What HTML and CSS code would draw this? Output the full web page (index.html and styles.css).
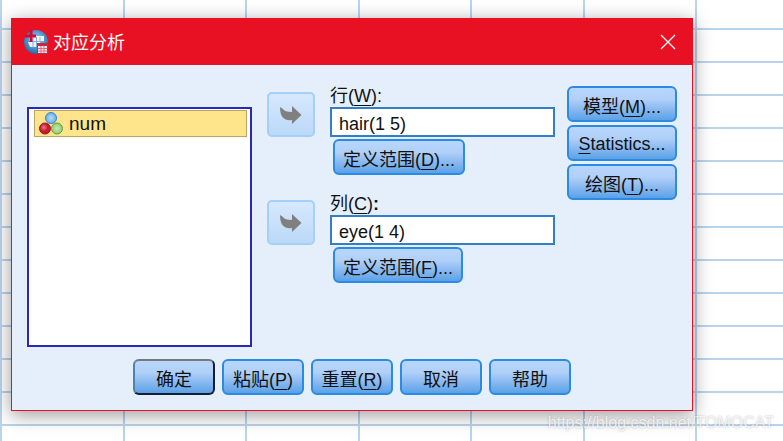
FILE: index.html
```html
<!DOCTYPE html>
<html lang="zh">
<head>
    <meta charset="UTF-8">
    <meta name="viewport" content="width=device-width, initial-scale=1.0">
    <title>对应分析</title>
    <link rel="stylesheet" href="styles.css">
</head>
<body>
    <main class="dialog">
        <header class="title-bar">
            <svg class="app-icon" viewBox="0 0 24 24" aria-hidden="true">
                <defs>
                    <radialGradient id="globe" cx="0.5" cy="0.4" r="0.6">
                        <stop offset="0" stop-color="#a9d3f0"/>
                        <stop offset="0.6" stop-color="#4f94cc"/>
                        <stop offset="1" stop-color="#2469aa"/>
                    </radialGradient>
                </defs>
                <circle cx="12" cy="12" r="12" fill="url(#globe)"/>
                <path d="M5 6h15v5H5zM4 12h12v5H6z" fill="#eef6fc"/>
                <path d="M5 11.500h15M9 8v9M12.500 7v10M16 7v4" stroke="#79b1dc" fill="none"/>
                <path d="M7 0v12M1 6h11" stroke="#d00b35" stroke-width="3"/>
                <path d="M13 13h11v11H13z" fill="#c92747"/>
                <path d="M14 16h9v7h-9z" fill="#fbe9ee"/>
                <path d="M14 18.500h9M14 21h9M17 16v7M20 16v7" stroke="#dc6a82"/>
            </svg>
            <h1>对应分析</h1>
            <button class="close-btn" type="button" aria-label="关闭">
                <svg viewBox="0 0 16 16"><path d="M1 1l14 14M15 1L1 15" stroke="#fff" stroke-width="1.300"/></svg>
            </button>
        </header>

        <form class="dialog-body">
            <div class="panel">
                <ul class="var-list">
                    <li class="var-item">
                        <svg class="var-icon" viewBox="0 0 24 23" aria-hidden="true">
                            <defs>
                                <radialGradient id="ballBlue"><stop offset="0" stop-color="#b5dcfb"/><stop offset="1" stop-color="#67aeea"/></radialGradient>
                                <radialGradient id="ballRed" cx="0.4" cy="0.4"><stop offset="0" stop-color="#ee7b84"/><stop offset="0.7" stop-color="#c41c30"/></radialGradient>
                                <radialGradient id="ballGreen"><stop offset="0" stop-color="#cbe8ae"/><stop offset="1" stop-color="#93c96c"/></radialGradient>
                            </defs>
                            <circle cx="12" cy="6" r="5.500" fill="url(#ballBlue)" stroke="#3b82c6"/>
                            <circle cx="6" cy="16.500" r="5.500" fill="url(#ballRed)" stroke="#a51327"/>
                            <circle cx="18" cy="16.500" r="5.500" fill="url(#ballGreen)" stroke="#60a043"/>
                        </svg>
                        <span>num</span>
                    </li>
                </ul>

                <div class="fields">
                    <div class="field-row">
                        <button class="arrow-btn" type="button" aria-label="移到行" disabled>
                            <svg viewBox="0 0 22 20"><path d="M0 2l3 2c1 2 4 3 9 3V1l9.500 9L12 19v-4C5 16 0 13 0 2z"/></svg>
                        </button>
                        <div class="field">
                            <label for="row-var">行(<u>W</u>):</label>
                            <input id="row-var" type="text" value="hair(1 5)">
                            <button class="btn range-btn" type="button">定义范围(<u>D</u>)...</button>
                        </div>
                    </div>
                    <div class="field-row">
                        <button class="arrow-btn" type="button" aria-label="移到列" disabled>
                            <svg viewBox="0 0 22 20"><path d="M0 2l3 2c1 2 4 3 9 3V1l9.500 9L12 19v-4C5 16 0 13 0 2z"/></svg>
                        </button>
                        <div class="field">
                            <label for="col-var">列(<u>C</u>)<b>:</b></label>
                            <input id="col-var" type="text" value="eye(1 4)">
                            <button class="btn range-btn" type="button">定义范围(<u>F</u>)...</button>
                        </div>
                    </div>
                </div>

                <div class="options">
                    <button class="btn" type="button">模型(<u>M</u>)...</button>
                    <button class="btn" type="button"><u>S</u>tatistics...</button>
                    <button class="btn" type="button">绘图(<u>T</u>)...</button>
                </div>
            </div>

            <footer class="actions">
                <button class="btn btn-default" type="submit">确定</button>
                <button class="btn" type="button">粘贴(<u>P</u>)</button>
                <button class="btn" type="reset">重置(<u>R</u>)</button>
                <button class="btn" type="button">取消</button>
                <button class="btn" type="button">帮助</button>
            </footer>
        </form>
    </main>

    <p class="watermark">https://blog.csdn.net/TOMOCAT</p>
</body>
</html>
```
FILE: styles.css
```css
:root {
    --red: #e81123;
    --panel: #e4effb;
    --line: #bad4ed;
    --btn-border: #2b8ae2;
}

* {
    margin: 0;
    padding: 0;
    box-sizing: border-box;
}

/* spreadsheet behind the dialog: two wide columns, then narrower ones */
body {
    min-height: 100vh;
    padding: 18px 90px 30px 11px;
    overflow: hidden;
    font-family: "Liberation Sans", "Noto Sans CJK SC", sans-serif;
    font-size: 18px;
    color: #111;
    background-color: #fff;
    background-image:
        linear-gradient(90deg,
            var(--line) 0 2px, transparent 2px 123px,
            var(--line) 123px 125px, transparent 125px 245px,
            var(--line) 245px 247px, transparent 247px 358px,
            var(--line) 358px 360px, transparent 360px 470px,
            var(--line) 470px 472px, transparent 472px 583px,
            var(--line) 583px 585px, transparent 585px 695px,
            var(--line) 695px 697px, transparent 697px),
        repeating-linear-gradient(180deg, transparent 0 28px, var(--line) 28px 30px, transparent 30px 33px);
}

.dialog {
    border: 1px solid var(--red);
    background: var(--panel);
    box-shadow: 0 4px 18px rgba(0, 0, 0, 0.4);
}

.title-bar {
    display: flex;
    align-items: center;
    gap: 5px;
    height: 46px;
    padding: 0 16px 0 12px;
    background: var(--red);
    color: #fff;
}

.title-bar h1 {
    flex: 1;
    padding-bottom: 3px;
    font-family: "Noto Sans CJK SC", sans-serif;
    font-size: 18px;
    font-weight: 400;
}

.app-icon {
    width: 24px;
    height: 24px;
}

.close-btn {
    width: 16px;
    height: 16px;
    border: 0;
    background: none;
}

.close-btn svg {
    display: block;
}

.dialog-body {
    padding: 20px 15px 15px;
}

.panel {
    display: grid;
    grid-template-columns: 225fr 291fr 110px;
    column-gap: 12px;
}

.var-list {
    min-height: 240px;
    margin-top: 22px;
    padding: 1px 3px 0 5px;
    border: 2px solid #2a28b8;
    background: #fff;
    list-style: none;
}

.var-item {
    display: flex;
    align-items: center;
    gap: 6px;
    height: 27px;
    padding-left: 4px;
    border: 1px solid #bba566;
    background: #fee58c;
    font-size: 19px;
}

.var-icon {
    width: 24px;
    height: 23px;
}

.fields {
    padding-left: 3px;
}

.field-row {
    display: flex;
    gap: 15px;
    height: 108px;
}

.arrow-btn {
    display: flex;
    align-items: center;
    justify-content: center;
    width: 48px;
    height: 45px;
    margin-top: 7px;
    border: 2px solid #a5cff7;
    border-radius: 5px;
    background: linear-gradient(#d6e8fd, #bbd9f8);
}

.arrow-btn svg {
    width: 22px;
    height: 20px;
    fill: #808080;
}

.field {
    flex: 1;
    min-width: 0;
}

.field label {
    display: block;
    height: 22px;
    line-height: 22px;
}

.field input {
    display: block;
    width: 100%;
    height: 30px;
    padding: 4px 7px 0;
    border: 2px solid #337ecb;
    background: #fff;
    color: #111;
    font: inherit;
}

u {
    text-decoration-thickness: 1px;
    text-underline-offset: 3px;
}

.btn {
    height: 36px;
    padding: 2px 8px 0;
    border: 2px solid var(--btn-border);
    border-radius: 6px;
    background: linear-gradient(#b9d6fc, #b0d0f9 35%, #8abaf0 65%, #5ba2e7);
    color: #111;
    font: inherit;
    white-space: nowrap;
}

.range-btn {
    margin: 2px 0 0 3px;
}

.options {
    display: flex;
    flex-direction: column;
    gap: 3px;
    padding-top: 1px;
}

.actions {
    display: flex;
    justify-content: center;
    gap: 7px;
    margin-top: 12px;
}

.actions .btn {
    width: 82px;
    padding: 2px 0 0;
}

.actions .btn-default {
    border-color: #75797e #14202c #14202c #5580a8;
}

.watermark {
    position: absolute;
    right: 9px;
    bottom: 9px;
    color: rgba(255, 255, 255, 0.8);
    font-size: 16px;
    text-shadow: 0 0 2px rgba(0, 0, 0, 0.3);
}
```
